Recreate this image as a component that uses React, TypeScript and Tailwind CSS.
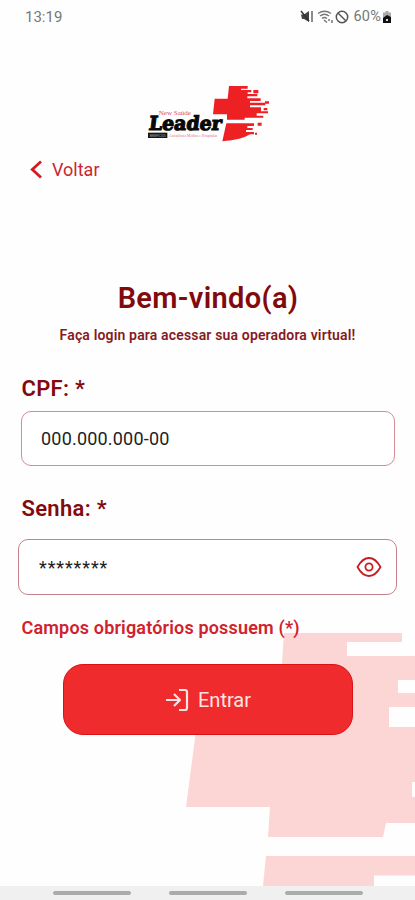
import React from "react";

function Logo() {
  return (
    <svg className="h-[75px] w-[140px]" viewBox="0 0 420 225" aria-label="New Saúde Leader">
      <g fill="#ed2024">
        <path d="M267 33H323V41H303V45H334V52H323V57H352V64H322V70H362V78H330V83H376V91H330V97H363V109H384V115H350V122H370V128H314V134H261V118H219L224 71H263Z" />
        <path d="M259 145H342V153H322V159H338V165H318V171H342V178H330Q306 194 247 199Z" />
        <path d="M340 45H355V55H340ZM375 79H387V86H375ZM371 99H382V106H371ZM353 143H365V152H353ZM345 173H351V179H345Z" />
      </g>
      <text x="56" y="120" textLength="97" lengthAdjust="spacingAndGlyphs" fill="#d94f5e" fontFamily="Liberation Serif, serif" fontSize="21">New Saúde</text>
      <g transform="translate(25 166) skewX(-7)">
        <text x="0" y="0" textLength="218" lengthAdjust="spacingAndGlyphs" fill="#080808" stroke="#080808" strokeWidth="3.5" fontFamily="DejaVu Serif, serif" fontWeight="700" fontSize="58">Leader</text>
      </g>
      <rect x="24" y="173" width="58" height="16" fill="#161616" />
      <text x="29" y="185" textLength="48" lengthAdjust="spacingAndGlyphs" fill="#aaa" fontFamily="Roboto, sans-serif" fontSize="10">BENEFÍCIOS</text>
      <text x="87" y="187" textLength="145" lengthAdjust="spacingAndGlyphs" fill="#df7180" fontFamily="Liberation Serif, serif" fontSize="13">Assistência Médica e Hospitalar</text>
    </svg>
  );
}

function StatusBar() {
  return (
    <header className="flex h-[34px] items-center justify-between pl-[25px] pr-[23px] text-[#777]">
      <span className="text-[15px] leading-[34px]">13:19</span>
      <div className="flex items-center">
        <svg className="h-[16px] w-[14px]" viewBox="0 0 14 16" fill="none" stroke="#333">
          <path d="M1 5.500H4L9 2V13L4 10H2Z" fill="#444" stroke="none" />
          <path d="M1 2L9 12" strokeWidth="1.500" />
          <path d="M12 2V13" stroke="#666" strokeWidth="1.500" />
        </svg>
        <svg className="ml-[3px] h-[16px] w-[17px]" viewBox="0 0 17 16" fill="none" stroke="#777" strokeWidth="1.500">
          <path d="M1 4.500Q7.500 0 14 4.500M3 7Q7.500 3.500 12 7M5 9.500Q7.500 7.500 10 9.500" />
          <path d="M7 11L10 13.500M12 10V12M15 11V14" />
        </svg>
        <svg className="ml-[1px] h-[14px] w-[14px]" viewBox="0 0 14 14" fill="none" stroke="#555" strokeWidth="1.500">
          <circle cx="7" cy="7" r="5.700" />
          <path d="M3 3L11 11" />
        </svg>
        <span className="ml-[4px] text-[14.500px] leading-[34px] tracking-[0.2px]">60%</span>
        <svg className="ml-[1px] h-[14px] w-[10px]" viewBox="0 0 10 14">
          <path d="M3.500 1H6.500V2.500H9V13H1V2.500H3.500Z" fill="#aaa" />
          <path d="M1 8L5 5L9 7V13H1Z" fill="#111" />
          <path d="M4 9H6V11H4Z" fill="#ddd" />
        </svg>
      </div>
    </header>
  );
}

function Watermark() {
  return (
    <svg className="absolute inset-0 h-[900px] w-[415px]" viewBox="0 0 415 900" fill="#fcd5d5" aria-hidden="true">
      <path d="M284 633H402V642H347V656H415V680H398V693H415V707H389V727H415V782H412V797H415V823H386L383 837H268L270 807H186L199 708H279Z" />
      <path d="M266 856H415V875.500H374V886H263Z" />
    </svg>
  );
}

export default function App() {
  return (
    <div className="relative h-[900px] w-[415px] overflow-hidden bg-[#fefefe] font-['Roboto',sans-serif]">
      <Watermark />
      <div className="relative flex h-full flex-col">
        <StatusBar />
        <div className="mt-[41px] flex justify-center pl-[5px]">
          <Logo />
        </div>
        <button className="mt-[5px] flex h-[30px] items-center self-start pl-[30px] text-[#cb2630]">
          <svg className="h-[20px] w-[13px]" viewBox="0 0 13 20" fill="none" stroke="#d51b20" strokeWidth="2.800">
            <path d="M11 1.500L2.300 9.500L11 17.500" />
          </svg>
          <span className="ml-[9px] text-[18px] leading-[30px]">Voltar</span>
        </button>
        <h1 className="mt-[93px] pl-[1px] text-center text-[29px] leading-[40px] font-semibold tracking-[0.34px] text-[#820a0c]">Bem-vindo(a)</h1>
        <p className="mt-[7px] text-center text-[14px] leading-[20px] font-semibold tracking-[0.16px] text-[#861a22]">Faça login para acessar sua operadora virtual!</p>
        <label className="mt-[30px] ml-[21.500px] text-[22px] leading-[28px] font-semibold tracking-[0.3px] text-[#820a0c]">CPF: *</label>
        <div className="mt-[8px] ml-[21px] flex h-[55px] w-[374px] items-center rounded-[10px] border border-[#d28d96] bg-white pl-[19px] text-[18px] tracking-[0.2px] text-[#222]">
          000.000.000-00
        </div>
        <label className="mt-[29px] ml-[21.500px] text-[22px] leading-[28px] font-semibold tracking-[0.3px] text-[#820a0c]">Senha: *</label>
        <div className="mt-[16px] ml-[18px] flex h-[56px] w-[379px] items-center justify-between rounded-[10px] border border-[#c5828c] bg-white pr-[14px] pl-[20px] text-[18px] text-[#222]">
          <span className="tracking-[0.9px]">********</span>
          <svg className="h-[22px] w-[27px]" viewBox="0 0 27 22" fill="none" stroke="#c91b21" strokeWidth="1.800">
            <path d="M2.500 11Q7.500 2 14 2T25.500 11Q20.500 20 14 20T2.500 11Z" strokeLinejoin="round" />
            <circle cx="14" cy="11" r="3.600" />
          </svg>
        </div>
        <p className="mt-[20px] ml-[21.500px] text-[18px] leading-[26px] font-semibold tracking-[0.17px] text-[#d0222c]">Campos obrigatórios possuem (*)</p>
        <button className="mt-[23px] ml-[63px] flex h-[71px] w-[290px] items-center justify-center rounded-[20px] border border-[#dc1115] bg-[#ef2b2e] text-[#ffe4e4]">
          <svg className="h-[24px] w-[24px]" viewBox="0 0 24 24" fill="none" stroke="currentColor" strokeWidth="2.200" strokeLinejoin="round">
            <path d="M1 12H15M9 6L15 12L9 18M14 2H20Q22 2 22 4V20Q22 22 20 22H14" />
          </svg>
          <span className="ml-[9px] text-[20px]">Entrar</span>
        </button>
        <nav className="mt-auto flex h-[14px] items-center justify-between bg-[#f0f0f0] pr-[52px] pl-[53px]">
          <span className="h-[4px] w-[78px] rounded-full bg-[#acacac]" />
          <span className="h-[4px] w-[78px] rounded-full bg-[#acacac]" />
          <span className="h-[4px] w-[78px] rounded-full bg-[#acacac]" />
        </nav>
      </div>
    </div>
  );
}
